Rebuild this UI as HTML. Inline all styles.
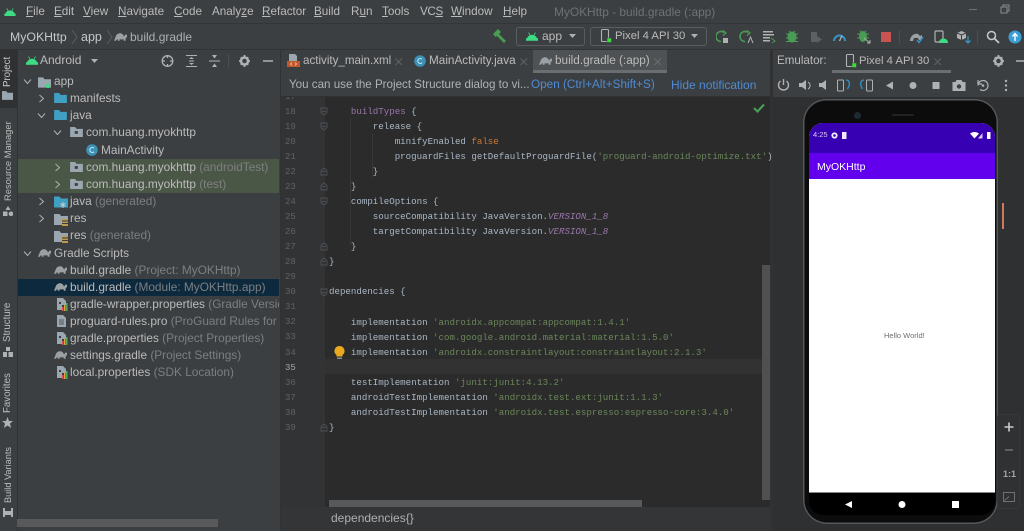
<!DOCTYPE html>
<html><head><meta charset="utf-8"><style>
html,body{margin:0;padding:0;background:#3c3f41;}
#r{position:relative;width:1024px;height:531px;overflow:hidden;background:#3c3f41;font-family:"Liberation Sans",sans-serif;font-size:12px;color:#bbbbbb;filter:blur(.35px);}
#r div,#r svg,#r span.a{position:absolute;}
.t{white-space:nowrap;line-height:16px;}
.g{color:#7c7f81;}
.m{font-size:11.7px;color:#bbb;top:4px;white-space:nowrap;line-height:16px;}
.m u{text-decoration:underline;text-underline-offset:1px;}
.tr{font-size:11.85px;color:#bbb;white-space:nowrap;line-height:16px;}
.c{font-family:"Liberation Mono",monospace;font-size:9.13px;line-height:14px;white-space:pre;color:#a9b7c6;left:329px;}
.n{font-family:"Liberation Mono",monospace;font-size:9px;line-height:14px;color:#606366;left:285px;}
.s{color:#6a8759;}.k{color:#cc7832;}.p{color:#9876aa;}.i{color:#9876aa;font-style:italic;}
.v{transform:rotate(-90deg);transform-origin:left top;white-space:nowrap;font-size:9.7px;color:#bbb;line-height:12px;}
</style></head><body><div id="r">

<svg width="0" height="0" style="position:absolute"><defs>
<symbol id="and" viewBox="0 0 14 10"><path d="M1 9C1 5.500 3.500 3 7 3s6 2.500 6 6z" fill="#3ddc84"/><path d="M3 .5 4.500 3M11 .5 9.500 3" stroke="#3ddc84" stroke-width="1"/><rect y="7" width="14" height="3" fill="#3ddc84"/></symbol>
<symbol id="tur" viewBox="0 0 14 10"><path d="M0 9 2 4C3 1.500 6 .5 8 1.200 10 2 10.500 4 11 4.500L12 2.500H14V5L12.500 6.500V9H10.500V7.500H6V9H4V7.500H3L2 9z" fill="#9aa0a3"/></symbol>
<symbol id="fld" viewBox="0 0 14 11"><path d="M0 0H5.500L7 2H14V11H0z" fill="#9aa7b0"/></symbol>
<symbol id="blu" viewBox="0 0 14 11"><path d="M0 0H5.500L7 2H14V11H0z" fill="#40a0c4"/></symbol>
<symbol id="pkg" viewBox="0 0 14 11"><path d="M0 0H5.500L7 2H14V11H0z" fill="#9aa7b0"/><rect x="5" y="4.500" width="3.500" height="3" fill="#3c3f41"/></symbol>
<symbol id="prop" viewBox="0 0 12 14"><path d="M1 1H7L10 4V8H6V13H1z" fill="#9aa7b0"/><rect x="3" y="5" width="2" height="2" fill="#3c3f41"/><rect x="6" y="10" width="1.500" height="4" fill="#e05555"/><rect x="8" y="8" width="1.500" height="6" fill="#e8a33d"/><rect x="10" y="6" width="1.500" height="8" fill="#59a869"/></symbol>
<symbol id="fo" viewBox="0 0 8 9"><path d="M1 8V3.500L4 1 7 3.500V8z" fill="none" stroke="#4f5254" stroke-width=".9"/><path d="M2 4.500H6" stroke="#4f5254" stroke-width=".9"/></symbol>
<symbol id="fc" viewBox="0 0 8 9"><path d="M1 1V5.500L4 8 7 5.500V1z" fill="none" stroke="#4f5254" stroke-width=".9"/><path d="M2 4.500H6" stroke="#4f5254" stroke-width=".9"/></symbol>
<symbol id="cv" viewBox="0 0 9 9"><path d="M1 2.500 4.500 6.500 8 2.500" fill="none" stroke="#afb1b3" stroke-width="1"/></symbol>
<symbol id="ch" viewBox="0 0 9 9"><path d="M2.500 1 6.500 4.500 2.500 8" fill="none" stroke="#afb1b3" stroke-width="1"/></symbol>
<symbol id="phn" viewBox="0 0 12 14"><rect x="1.500" y=".5" width="7" height="12" rx="1" fill="none" stroke="#afb1b3" stroke-width="1.100"/><rect x="7" y="9" width="4.500" height="4.500" fill="#3ddc3d" stroke="#3c3f41" stroke-width=".5"/></symbol>
</defs></svg>

<!-- borders -->
<div style="left:0;top:23px;width:1024px;height:1px;background:#333638"></div>
<div style="left:0;top:49px;width:1024px;height:1px;background:#323232"></div>
<div style="left:17px;top:49px;width:1px;height:482px;background:#323232"></div>

<!-- menu -->
<svg style="left:4px;top:8px" width="12" height="8"><use href="#and"/></svg>
<div class="m" style="left:26px"><u>F</u>ile</div>
<div class="m" style="left:54px"><u>E</u>dit</div>
<div class="m" style="left:83px"><u>V</u>iew</div>
<div class="m" style="left:118px"><u>N</u>avigate</div>
<div class="m" style="left:174px"><u>C</u>ode</div>
<div class="m" style="left:212px">Analy<u>z</u>e</div>
<div class="m" style="left:262px"><u>R</u>efactor</div>
<div class="m" style="left:314px"><u>B</u>uild</div>
<div class="m" style="left:351px">R<u>u</u>n</div>
<div class="m" style="left:382px"><u>T</u>ools</div>
<div class="m" style="left:420px;letter-spacing:-.4px">VC<u>S</u></div>
<div class="m" style="left:451px"><u>W</u>indow</div>
<div class="m" style="left:503px"><u>H</u>elp</div>
<div class="m" style="left:554px;color:#6f7274;font-size:11.9px">MyOKHttp - build.gradle (:app)</div>
<div style="left:969px;top:9px;width:8px;height:1px;background:#6f7274"></div>
<svg style="left:1000px;top:4px" width="10" height="10"><path d="M1 3H7V9H1zM3 3V1H9V7H7" fill="none" stroke="#8a8d8f"/></svg>

<!-- breadcrumb -->
<div class="t" style="left:10px;top:29px;font-size:12.3px;color:#c5c7c9">MyOKHttp</div>
<svg style="left:71px;top:30px" width="8" height="14"><path d="M1 0 6 7 1 14" fill="none" stroke="#5a5d5f"/></svg>
<div class="t" style="left:81px;top:29px;font-size:12.5px;color:#c5c7c9">app</div>
<svg style="left:106px;top:30px" width="8" height="14"><path d="M1 0 6 7 1 14" fill="none" stroke="#5a5d5f"/></svg>
<svg style="left:114px;top:32px" width="13" height="10"><use href="#tur"/></svg>
<div class="t" style="left:130px;top:29px;font-size:12px;color:#aeb0b2">build.gradle</div>

<!-- toolbar -->
<svg style="left:493px;top:29px" width="14" height="14"><path d="M0 5 5 0 8 3 6 5 13 12 11 14 4 7 2.500 8z" fill="#499c54"/></svg>
<div style="left:516px;top:27px;width:67px;height:17px;border:1px solid #5a5d5f;border-radius:3px"></div>
<svg style="left:526px;top:32px" width="12" height="9"><use href="#and"/></svg>
<div class="t" style="left:542px;top:28px">app</div>
<svg style="left:569px;top:34px" width="8" height="5"><path d="M0 0H7L3.500 4z" fill="#afb1b3"/></svg>
<div style="left:590px;top:27px;width:115px;height:17px;border:1px solid #5a5d5f;border-radius:3px"></div>
<svg style="left:600px;top:29px" width="12" height="14"><use href="#phn"/></svg>
<div class="t" style="left:615px;top:28px;font-size:11.3px">Pixel 4 API 30</div>
<svg style="left:691px;top:34px" width="8" height="5"><path d="M0 0H7L3.500 4z" fill="#afb1b3"/></svg>
<svg style="left:716px;top:30px" width="270" height="14">
<g fill="none" stroke="#499c54" stroke-width="1.600"><path d="M8 2.500A5 5 0 1 0 5 11.500"/><path d="M7 .5 10 3 7 5.500" stroke-width="1.300"/></g><rect x="7" y="8" width="5" height="5" fill="#afb1b3"/>
<g transform="translate(24 0)" fill="none" stroke="#499c54" stroke-width="1.600"><path d="M8 2.500A5 5 0 1 0 5 11.500"/><path d="M7 .5 10 3 7 5.500" stroke-width="1.300"/></g><path d="M32 13 34.500 7 37 13" fill="none" stroke="#afb1b3"/>
<g transform="translate(47 0)" fill="#afb1b3"><rect y="1" width="10" height="1.500"/><rect y="4" width="11" height="1.500"/><rect y="7" width="7" height="1.500"/><rect y="10" width="7" height="1.500"/><path d="M8 8 12 11 9 13" fill="none" stroke="#499c54"/></g>
<g transform="translate(70 0)" fill="#499c54"><ellipse cx="6" cy="7" rx="4.500" ry="5.500"/><path d="M0 4H12M0 8H12M0 11.500H12M3 1 5 3M9 1 7 3" stroke="#499c54"/></g>
<g transform="translate(94 0)"><path d="M1 2H7V12H1z" fill="#5d6062"/><path d="M7 6 12 9.500 7 13z" fill="#5d6062"/></g>
<g transform="translate(117 0)" fill="none"><path d="M1 11A5.500 5.500 0 0 1 12 11" stroke="#3592c4" stroke-width="2"/><path d="M6.500 11 9 5.500" stroke="#afb1b3" stroke-width="1.300"/></g>
<g transform="translate(141 0)" fill="#499c54"><ellipse cx="6" cy="6.500" rx="4" ry="5.500"/><path d="M0 4H12M0 8H12M3 .5 5 3M9 .5 7 3" stroke="#499c54"/><path d="M7 8 13 13M10 13H13V10" stroke="#afb1b3" fill="none"/></g>
<rect x="165" y="2" width="10" height="10" fill="#c75450"/>
<rect x="183" y="0" width="1" height="14" fill="#4c4f51"/>
<g transform="translate(194 0)"><path d="M0 10C1 5 5 3 8 4L10 6 12 5 12 10H9L8 8H4L3 11H0z" fill="#9aa0a3"/><path d="M7 10 9 12.500 13 7" fill="none" stroke="#3592c4" stroke-width="1.500"/></g>
<g transform="translate(218 0)"><rect x="1" y="1" width="8" height="11" rx="1" fill="none" stroke="#afb1b3" stroke-width="1.200"/><path d="M5 13C5 10 7 8.500 9.500 8.500S14 10 14 13z" fill="#3ddc84"/></g>
<g transform="translate(241 0)"><path d="M4.500 1 9 3V8L4.500 10 0 8V3z" fill="#afb1b3"/><path d="M4.500 5V10M0 3 4.500 5 9 3" stroke="#3c3f41" fill="none"/><path d="M11 6V13M8.500 10.500 11 13 13.500 10.500" stroke="#3592c4" fill="none" stroke-width="1.300"/></g>
<rect x="261" y="0" width="1" height="14" fill="#4c4f51"/>
</svg>
<svg style="left:986px;top:30px" width="14" height="14"><circle cx="5.500" cy="5.500" r="4" fill="none" stroke="#c5c7c9" stroke-width="1.500"/><path d="M8.500 8.500 13 13" stroke="#c5c7c9" stroke-width="1.800"/></svg>
<svg style="left:1008px;top:30px" width="14" height="14"><circle cx="7" cy="7" r="6.500" fill="#389fd6"/><path d="M7 11V5M4.500 6.500 7 3.500 9.500 6.500" stroke="#fff" stroke-width="1.400" fill="none"/></svg>

<!-- left strip -->
<div style="left:0;top:50px;width:17px;height:58px;background:#2f3133"></div>
<div class="v" style="left:2px;top:87px;color:#c5c7c9">Project</div>
<svg style="left:2px;top:91px" width="11" height="9"><use href="#fld"/></svg>
<div class="v" style="left:2px;top:201px;font-size:9.4px">Resource Manager</div>
<svg style="left:3px;top:206px" width="10" height="10"><path d="M5 0 7.500 4H2.500zM0 5.500H4.500V10H0zM8 5.500A2.300 2.300 0 1 1 7.990 5.500z" fill="#afb1b3"/></svg>
<div class="v" style="left:2px;top:342px">Structure</div>
<svg style="left:3px;top:347px" width="10" height="10"><path d="M3 0H7V4H3zM0 5H4V10H0zM5.500 5H10V10H5.500z" fill="#afb1b3"/></svg>
<div class="v" style="left:2px;top:413px">Favorites</div>
<svg style="left:2px;top:417px" width="11" height="11"><path d="M5.500 0 7 4H11L8 6.500 9 11 5.500 8.500 2 11 3 6.500 0 4H4z" fill="#afb1b3"/></svg>
<div class="v" style="left:2px;top:503px;font-size:9.2px">Build Variants</div>
<svg style="left:3px;top:508px" width="10" height="9"><path d="M0 0H2V3H8V0H10V9H8V7H2V9H0z" fill="#afb1b3"/></svg>

<!-- project panel -->
<svg style="left:26px;top:56px" width="12" height="9"><use href="#and"/></svg>
<div class="t" style="left:40px;top:52px;font-size:12px">Android</div>
<svg style="left:91px;top:59px" width="8" height="5"><path d="M0 0H7L3.500 4z" fill="#afb1b3"/></svg>
<svg style="left:161px;top:54px" width="120" height="14" fill="none" stroke="#afb1b3">
<circle cx="6.500" cy="7" r="5.300" stroke-width="1.300"/><path d="M6.500 1V4M6.500 10V13M1 7H4M9 7H12" stroke-width="1.300"/>
<g transform="translate(25 0)"><path d="M0 1.500H11M0 12.500H11M3 7H8" stroke-width="1"/><path d="M3 5 5.500 3 8 5zM3 9 5.500 11 8 9z" fill="#afb1b3" stroke="none"/></g>
<g transform="translate(48 0)"><path d="M0 7H11" stroke-width="1"/><path d="M3 1 5.500 4.500 8 1zM3 13 5.500 9.500 8 13z" fill="#afb1b3" stroke="none"/></g>
<path d="M67.500 0V14" stroke="#4c4f51"/>
<g transform="translate(78 1)"><circle cx="5.500" cy="6" r="3.500" stroke-width="2.500"/><path d="M5.500 0V2M5.500 10V12M0 6H2M9 6H11M1.800 2.300 3 3.500M8 8.500 9.200 9.700M9.200 2.300 8 3.500M3 8.500 1.800 9.700" stroke-width="1.800"/></g>
<path d="M102 7H112" stroke-width="1.500"/>
</svg>

<!-- tree rows backgrounds -->
<div style="left:18px;top:159px;width:261px;height:34px;background:#4b5746"></div>
<div style="left:18px;top:279px;width:261px;height:17px;background:#0d293e"></div>

<!-- tree -->
<svg style="left:23px;top:77px" width="9" height="9"><use href="#cv"/></svg>
<svg style="left:38px;top:77px" width="13" height="11"><use href="#fld"/><circle cx="10" cy="9" r="2.200" fill="#3ddc84"/></svg>
<div class="tr" style="left:54px;top:73px">app</div>
<svg style="left:37px;top:94px" width="9" height="9"><use href="#ch"/></svg>
<svg style="left:54px;top:93px" width="13" height="10"><use href="#blu"/></svg>
<div class="tr" style="left:70px;top:90px">manifests</div>
<svg style="left:37px;top:111px" width="9" height="9"><use href="#cv"/></svg>
<svg style="left:54px;top:110px" width="13" height="10"><use href="#blu"/></svg>
<div class="tr" style="left:70px;top:107px">java</div>
<svg style="left:53px;top:128px" width="9" height="9"><use href="#cv"/></svg>
<svg style="left:70px;top:127px" width="13" height="10"><use href="#pkg"/></svg>
<div class="tr" style="left:86px;top:124px">com.huang.myokhttp</div>
<svg style="left:86px;top:144px" width="12" height="12"><circle cx="6" cy="6" r="5.800" fill="#3d91b4"/><path d="M8 4.200A2.500 2.500 0 1 0 8 7.800" fill="none" stroke="#c8e2ee" stroke-width="1.100"/></svg>
<div class="tr" style="left:101px;top:142px">MainActivity</div>
<svg style="left:53px;top:163px" width="9" height="9"><use href="#ch"/></svg>
<svg style="left:70px;top:162px" width="13" height="10"><use href="#pkg"/></svg>
<div class="tr" style="left:86px;top:159px">com.huang.myokhttp <span class="g">(androidTest)</span></div>
<svg style="left:53px;top:180px" width="9" height="9"><use href="#ch"/></svg>
<svg style="left:70px;top:179px" width="13" height="10"><use href="#pkg"/></svg>
<div class="tr" style="left:86px;top:176px">com.huang.myokhttp <span class="g">(test)</span></div>
<svg style="left:37px;top:197px" width="9" height="9"><use href="#ch"/></svg>
<svg style="left:54px;top:196px" width="14" height="12"><use href="#blu"/><path d="M9 6V12M6.500 7.500 11.500 10.500M11.500 7.500 6.500 10.500" stroke="#c8cacc"/></svg>
<div class="tr" style="left:70px;top:193px">java <span class="g">(generated)</span></div>
<svg style="left:37px;top:214px" width="9" height="9"><use href="#ch"/></svg>
<svg style="left:54px;top:213px" width="14" height="13"><use href="#fld"/><rect x="8" y="6" width="6" height="7" fill="#c09a4a"/><path d="M8 8H14M8 10.500H14" stroke="#3c3f41"/></svg>
<div class="tr" style="left:70px;top:210px">res</div>
<svg style="left:54px;top:230px" width="14" height="13"><use href="#fld"/><rect x="8" y="6" width="6" height="7" fill="#c09a4a"/><path d="M8 8H14M8 10.500H14" stroke="#3c3f41"/></svg>
<div class="tr" style="left:70px;top:227px">res <span class="g">(generated)</span></div>
<svg style="left:23px;top:249px" width="9" height="9"><use href="#cv"/></svg>
<svg style="left:38px;top:248px" width="13" height="10"><use href="#tur"/></svg>
<div class="tr" style="left:54px;top:245px">Gradle Scripts</div>
<svg style="left:54px;top:265px" width="13" height="10"><use href="#tur"/></svg>
<div class="tr" style="left:70px;top:262px">build.gradle <span class="g">(Project: MyOKHttp)</span></div>
<svg style="left:54px;top:282px" width="13" height="10"><use href="#tur"/></svg>
<div class="tr" style="left:70px;top:279px">build.gradle <span class="g">(Module: MyOKHttp.app)</span></div>
<svg style="left:56px;top:297px" width="12" height="14"><use href="#prop"/></svg>
<div class="tr" style="left:70px;top:296px;width:209px;overflow:hidden">gradle-wrapper.properties <span class="g">(Gradle Version)</span></div>
<svg style="left:56px;top:314px" width="12" height="14"><path d="M1 1H7L10 4V13H1z" fill="#9aa7b0"/><path d="M3 6H8M3 8H8M3 10H8" stroke="#3c3f41" stroke-width=".8"/></svg>
<div class="tr" style="left:70px;top:313px;width:209px;overflow:hidden">proguard-rules.pro <span class="g">(ProGuard Rules for MyOKHttp)</span></div>
<svg style="left:56px;top:331px" width="12" height="14"><use href="#prop"/></svg>
<div class="tr" style="left:70px;top:330px">gradle.properties <span class="g">(Project Properties)</span></div>
<svg style="left:54px;top:350px" width="13" height="10"><use href="#tur"/></svg>
<div class="tr" style="left:70px;top:347px">settings.gradle <span class="g">(Project Settings)</span></div>
<svg style="left:56px;top:365px" width="12" height="14"><use href="#prop"/></svg>
<div class="tr" style="left:70px;top:364px">local.properties <span class="g">(SDK Location)</span></div>
<!-- panel scrollbar -->
<div style="left:17px;top:519px;width:201px;height:8px;background:#58595b"></div>

<!-- editor tabs -->
<div style="left:280px;top:50px;width:1px;height:481px;background:#323232"></div>
<svg style="left:287px;top:54px" width="13" height="14"><path d="M2 0H8L10 2V7H2z" fill="#9aa7b0"/><rect y="7" width="13" height="6" fill="#c3592b"/><path d="M5 8.500 3.500 10 5 11.500M8 8.500 9.500 10 8 11.500" fill="none" stroke="#f0d0c0" stroke-width=".8"/></svg>
<div class="t" style="left:303px;top:53px;font-size:11.6px">activity_main.xml</div>
<svg style="left:395px;top:58px" width="8" height="8"><path d="M.5 .5 7 7M7 .5 .5 7" stroke="#5f6264"/></svg>
<svg style="left:414px;top:55px" width="12" height="12"><circle cx="6" cy="6" r="5.800" fill="#3d91b4"/><path d="M8 4.200A2.500 2.500 0 1 0 8 7.800" fill="none" stroke="#c8e2ee" stroke-width="1.100"/></svg>
<div class="t" style="left:429px;top:53px;font-size:11.75px">MainActivity.java</div>
<svg style="left:520px;top:58px" width="8" height="8"><path d="M.5 .5 7 7M7 .5 .5 7" stroke="#5f6264"/></svg>
<div style="left:533px;top:50px;width:134px;height:20px;background:#4e5254"></div>
<div style="left:533px;top:70px;width:134px;height:3px;background:#6a6e71"></div>
<svg style="left:539px;top:56px" width="13" height="10"><use href="#tur"/></svg>
<div class="t" style="left:555px;top:53px;font-size:11.75px">build.gradle (:app)</div>
<svg style="left:654px;top:58px" width="8" height="8"><path d="M.5 .5 7 7M7 .5 .5 7" stroke="#6c6f71"/></svg>

<!-- notification -->
<div style="left:281px;top:73px;width:489px;height:23px;background:#3c3f41;border-bottom:1px solid #323232"></div>
<div class="t" style="left:289px;top:77px;color:#b0b2b4;font-size:11.6px">You can use the Project Structure dialog to vi...</div>
<div class="t" style="left:531px;top:77px;color:#4f8ad4;font-size:11.75px">Open (Ctrl+Alt+Shift+S)</div>
<div class="t" style="left:671px;top:77px;color:#4f8ad4">Hide notification</div>

<!-- editor -->
<div style="left:281px;top:97px;width:44px;height:410px;background:#313335"></div>
<div style="left:325px;top:97px;width:445px;height:410px;background:#2b2b2b"></div>
<div style="left:325px;top:359px;width:445px;height:15px;background:#323232"></div>
<div style="left:762px;top:265px;width:8px;height:235px;background:#4f5051"></div>
<div style="left:329px;top:500px;width:313px;height:7px;background:#58595b"></div>
<div style="left:281px;top:507px;width:489px;height:24px;background:#333537"></div>
<div style="left:770px;top:50px;width:3px;height:481px;background:#323232"></div>
<div class="t" style="left:331px;top:510px;color:#aeb0b2">dependencies{}</div>
<svg style="left:753px;top:103px" width="12" height="10"><path d="M1 5 4.500 8.500 11 1.500" fill="none" stroke="#499c54" stroke-width="2.200"/></svg>

<div style="left:281px;top:97px;width:40px;height:4px;overflow:hidden"><div class="n" style="left:4px;top:-7px">17</div></div>
<div class="n" style="top:105px">18</div><div class="n" style="top:120px">19</div><div class="n" style="top:135px">20</div><div class="n" style="top:150px">21</div><div class="n" style="top:165px">22</div><div class="n" style="top:180px">23</div><div class="n" style="top:195px">24</div><div class="n" style="top:210px">25</div><div class="n" style="top:225px">26</div><div class="n" style="top:240px">27</div><div class="n" style="top:255px">28</div><div class="n" style="top:270px">29</div><div class="n" style="top:285px">30</div><div class="n" style="top:300px">31</div><div class="n" style="top:315px">32</div><div class="n" style="top:330px">33</div><div class="n" style="top:346px">34</div><div class="n" style="top:361px;color:#a4a3a3">35</div><div class="n" style="top:376px">36</div><div class="n" style="top:391px">37</div><div class="n" style="top:406px">38</div><div class="n" style="top:421px">39</div>

<svg style="left:320px;top:107px" width="8" height="9"><use href="#fc"/></svg>
<svg style="left:320px;top:122px" width="8" height="9"><use href="#fc"/></svg>
<svg style="left:320px;top:167px" width="8" height="9"><use href="#fo"/></svg>
<svg style="left:320px;top:182px" width="8" height="9"><use href="#fo"/></svg>
<svg style="left:320px;top:197px" width="8" height="9"><use href="#fc"/></svg>
<svg style="left:320px;top:242px" width="8" height="9"><use href="#fo"/></svg>
<svg style="left:320px;top:257px" width="8" height="9"><use href="#fo"/></svg>
<svg style="left:320px;top:288px" width="8" height="9"><use href="#fc"/></svg>
<svg style="left:320px;top:423px" width="8" height="9"><use href="#fo"/></svg>
<div style="left:350px;top:118px;width:1px;height:128px;background:#373737"></div>
<div style="left:372px;top:133px;width:1px;height:45px;background:#373737"></div>

<div class="c" style="top:105px">    <span class="p">buildTypes</span> {</div>
<div class="c" style="top:120px">        release {</div>
<div class="c" style="top:135px">            minifyEnabled <span class="k">false</span></div>
<div class="c" style="top:150px">            proguardFiles getDefaultProguardFile(<span class="s">'proguard-android-optimize.txt'</span>)</div>
<div class="c" style="top:165px">        }</div>
<div class="c" style="top:180px">    }</div>
<div class="c" style="top:195px">    compileOptions {</div>
<div class="c" style="top:210px">        sourceCompatibility JavaVersion.<span class="i">VERSION_1_8</span></div>
<div class="c" style="top:225px">        targetCompatibility JavaVersion.<span class="i">VERSION_1_8</span></div>
<div class="c" style="top:240px">    }</div>
<div class="c" style="top:255px">}</div>
<div class="c" style="top:285px">dependencies {</div>
<div class="c" style="top:316px">    implementation <span class="s">'androidx.appcompat:appcompat:1.4.1'</span></div>
<div class="c" style="top:331px">    implementation <span class="s">'com.google.android.material:material:1.5.0'</span></div>
<div class="c" style="top:346px">    implementation <span class="s">'androidx.constraintlayout:constraintlayout:2.1.3'</span></div>
<div class="c" style="top:376px">    testImplementation <span class="s">'junit:junit:4.13.2'</span></div>
<div class="c" style="top:391px">    androidTestImplementation <span class="s">'androidx.test.ext:junit:1.1.3'</span></div>
<div class="c" style="top:406px">    androidTestImplementation <span class="s">'androidx.test.espresso:espresso-core:3.4.0'</span></div>
<div class="c" style="top:421px">}</div>
<svg style="left:334px;top:346px" width="11" height="14"><path d="M5.500 0A5 5 0 0 1 8.500 9V10.500H2.500V9A5 5 0 0 1 5.500 0z" fill="#eaa81f"/><rect x="3" y="11.500" width="5" height="1.500" fill="#8a8d8f"/></svg>

<!-- emulator -->
<div style="left:773px;top:50px;width:251px;height:481px;background:#2e3032"></div>
<div style="left:773px;top:50px;width:251px;height:47px;background:#3c3f41"></div>
<div class="t" style="left:777px;top:53px;font-size:11.6px">Emulator:</div>
<svg style="left:845px;top:54px" width="12" height="14"><use href="#phn"/></svg>
<div class="t" style="left:859px;top:53px;font-size:11.3px">Pixel 4 API 30</div>
<svg style="left:934px;top:58px" width="8" height="8"><path d="M.5 .5 7 7M7 .5 .5 7" stroke="#5f6264"/></svg>
<div style="left:832px;top:70px;width:119px;height:3px;background:#6a6e71"></div>
<svg style="left:992px;top:54px" width="32" height="14"><g transform="translate(1 1)" fill="none" stroke="#afb1b3"><circle cx="5.500" cy="6" r="3.500" stroke-width="2.500"/><path d="M5.500 0V2M5.500 10V12M0 6H2M9 6H11M1.800 2.300 3 3.500M8 8.500 9.200 9.700M9.200 2.300 8 3.500M3 8.500 1.800 9.700" stroke-width="1.800"/></g><path d="M24 7H32" stroke="#afb1b3" stroke-width="1.500"/></svg>
<svg style="left:777px;top:78px" width="225" height="15" fill="#afb1b3">
<g fill="none" stroke="#afb1b3" stroke-width="1.400"><path d="M3.500 3A5 5 0 1 0 9.500 3"/><path d="M6.500 1V7"/></g>
<path transform="translate(22 0)" d="M0 5H3L7 2V12L3 9H0z"/><path d="M31 4A4 4 0 0 1 31 11" fill="none" stroke="#afb1b3"/>
<path transform="translate(42 0)" d="M0 5H3L7 2V12L3 9H0z"/>
<g transform="translate(60 0)" fill="none"><rect x=".5" y="2" width="6" height="11" rx="1" stroke="#afb1b3"/><path d="M9 2C12 2 13 5 12 8L10.500 11" stroke="#3592c4" stroke-width="1.300"/></g>
<g transform="translate(83 0)" fill="none"><rect x="6.500" y="2" width="6" height="11" rx="1" stroke="#afb1b3"/><path d="M4 2C1 2 0 5 1 8L2.500 11" stroke="#3592c4" stroke-width="1.300"/></g>
<path d="M109 7.500 116 3.500V11.500z"/>
<circle cx="136" cy="7.500" r="3.500"/>
<rect x="155.500" y="4" width="7" height="7"/>
<path d="M175.500 4H178.500L179.500 2H184.500L185.500 4H188.500V13H175.500z"/><circle cx="182" cy="8.500" r="2.200" fill="#3c3f41"/>
<path d="M201 7.500A5 5 0 1 1 203 11.500M201 2V6H205" fill="none" stroke="#afb1b3" stroke-width="1.200"/><circle cx="206" cy="7.500" r="1.300"/>
</svg>
<svg style="left:1004px;top:78px" width="6" height="15" fill="#afb1b3"><circle cx="2" cy="3" r="1.200"/><circle cx="2" cy="7.500" r="1.200"/><circle cx="2" cy="12" r="1.200"/></svg>

<!-- phone -->
<div style="left:803px;top:99px;width:195px;height:425px;background:#0c0c0d;border-radius:23px 23px 24px 24px;box-shadow:inset 0 0 0 1.500px #55585a"></div>
<div style="left:809px;top:123px;width:186px;height:370px;background:#fff;border-radius:14px 14px 0 0;overflow:hidden">
 <div style="left:0;top:0;width:186px;height:30px;background:#3700b3"></div>
 <div style="left:0;top:30px;width:186px;height:26px;background:#6200ee"></div>
</div>
<div style="left:809px;top:493px;width:186px;height:22px;background:#000;border-radius:0 0 14px 14px"></div>
<div style="left:809px;top:492px;width:186px;height:1px;background:#888"></div>
<div class="t" style="left:813px;top:130px;font-size:7.5px;line-height:10px;color:#d9cdf2">4:25</div>
<svg style="left:830px;top:131px" width="20" height="9" fill="#f0ebfb"><circle cx="4.500" cy="4.500" r="2.200" fill="none" stroke="#f0ebfb" stroke-width="1.800"/><path d="M12 1H16.500V8H12z"/></svg>
<svg style="left:970px;top:131px" width="24" height="9" fill="#fff"><path d="M0 2.500C3 .5 6 .5 9 2.500L4.500 7.500z"/><path d="M8 7.500 12.500 2V7.500z" opacity=".8"/><rect x="17" y="1" width="3.500" height="7"/></svg>
<div class="t" style="left:817px;top:159px;font-size:10.5px;color:#fff">MyOKHttp</div>
<div class="t" style="left:884px;top:331px;font-size:7.5px;line-height:10px;color:#6f6f6f">Hello World!</div>
<svg style="left:840px;top:498px" width="125" height="13" fill="#fff"><path d="M5 6.500 12 3V10z"/><circle cx="62" cy="6.500" r="3.500"/><rect x="112" y="3" width="7" height="7"/></svg>
<div style="left:854px;top:112px;width:7px;height:7px;background:#1e2a33;border-radius:50%"></div>
<div style="left:892px;top:114px;width:22px;height:2px;background:#222;border-radius:1px"></div>
<div style="left:1002px;top:203px;width:2px;height:26px;background:#d07a5a"></div>

<!-- zoom ctrl -->
<div style="left:997px;top:414px;width:23px;height:95px;background:#2f3133;border-radius:3px;border:1px solid #363839;box-sizing:border-box"></div>
<svg style="left:1003px;top:420px" width="12" height="84"><path d="M1.500 7H10.500M6 2.500V11.500" stroke="#c8cacc" stroke-width="1.600"/><path d="M2 30H10" stroke="#6e7173" stroke-width="1.500"/><rect x=".5" y="72.500" width="11" height="9" fill="none" stroke="#6e7173"/><path d="M1.500 80.500 6 76.500" stroke="#6e7173"/></svg>
<div class="t" style="left:1003px;top:466px;font-size:9px;font-weight:bold;color:#a4a6a8">1:1</div>
</div></body></html>
